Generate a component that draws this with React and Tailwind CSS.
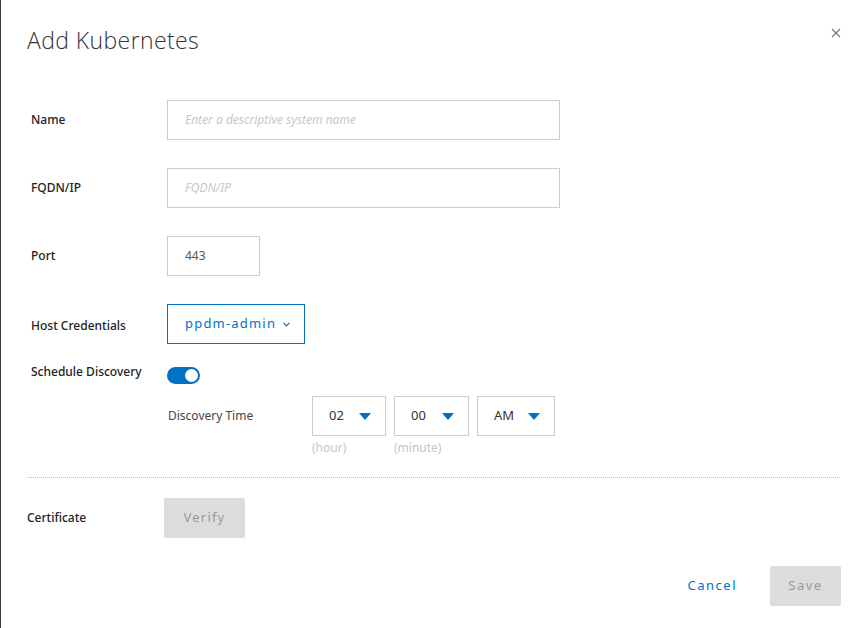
import React from 'react';

const font = { fontFamily: '"Noto Sans", "Open Sans", sans-serif' };

// Caret used in the time pickers
const Caret = () => (
  <svg width="12" height="7" viewBox="0 0 12 7" className="fill-[#0072c6]">
    <path d="M0 0 L12 0 L6 7 Z" />
  </svg>
);

const Label = ({ children, className = '' }) => (
  <div className={`w-[136px] shrink-0 text-[12px] font-medium text-[#222] ${className}`}>{children}</div>
);

const TextInput = ({ placeholder, value, width }) => (
  <div className={`${width} h-10 border border-[#ccc] flex items-center px-[17px] text-[12px]`}>
    {value ? (
      <span className="text-[#555]">{value}</span>
    ) : (
      <span className="italic text-[#c8c8c8]">{placeholder}</span>
    )}
  </div>
);

const TimeSelect = ({ value, width }) => (
  <div className={`${width} h-10 border border-[#ccc] flex items-center justify-between pl-[16px] pr-[14px] text-[13px] text-[#333]`}>
    <span>{value}</span>
    <Caret />
  </div>
);

export default function App() {
  return (
    <div className="w-[863px] h-[628px] bg-white border-l border-[#3a3a3a] relative overflow-hidden" style={font}>
      {/* Header */}
      <div className="flex items-start justify-between pl-[26px] pr-[22px] pt-[24px]">
        <h1 className="text-[23px] leading-[32px] font-light text-[#333] tracking-[0.4px]" style={{ fontFamily: '"Open Sans", sans-serif' }}>Add Kubernetes</h1>
        <button className="mt-[4px] text-[#777]">
          <svg width="10" height="10" viewBox="0 0 10 10" stroke="currentColor" strokeWidth="1.1">
            <path d="M1 1 L9 9 M9 1 L1 9" />
          </svg>
        </button>
      </div>

      {/* Form */}
      <div className="flex flex-col pl-[30px] mt-[44px]">
        <div className="flex items-center">
          <Label>Name</Label>
          <TextInput width="w-[393px]" placeholder="Enter a descriptive system name" />
        </div>
        <div className="flex items-center mt-[28px]">
          <Label>FQDN/IP</Label>
          <TextInput width="w-[393px]" placeholder="FQDN/IP" />
        </div>
        <div className="flex items-center mt-[28px]">
          <Label>Port</Label>
          <TextInput width="w-[93px]" value="443" />
        </div>
        <div className="flex items-center mt-[28px]">
          <Label className="pt-[3px]">Host Credentials</Label>
          <div className="w-[138px] h-10 border border-[#0072c6] flex items-center pl-[17px] pr-[10px] gap-[7px]">
            <span className="text-[13px] text-[#0072c6] tracking-[1.2px]">ppdm-admin</span>
            <svg width="7" height="5" viewBox="0 0 7 5" fill="none" stroke="#0072c6" strokeWidth="1.2">
              <path d="M0.5 0.8 L3.5 3.8 L6.5 0.8" />
            </svg>
          </div>
        </div>
        <div className="flex items-start mt-[19px]">
          <Label>Schedule Discovery</Label>
          <div className="mt-[4px] w-[33px] h-[17px] rounded-full bg-[#0072c6] flex items-center justify-end pr-[2px]">
            <div className="w-[13px] h-[13px] rounded-full bg-white" />
          </div>
        </div>
        <div className="flex mt-[12px] pl-[137px]">
          <div className="w-[144px] h-10 flex items-center text-[12px] text-[#444]">Discovery Time</div>
          <div className="flex flex-col">
            <TimeSelect width="w-[74px]" value="02" />
            <span className="text-[12px] text-[#c5c5c5] mt-[3px]">(hour)</span>
          </div>
          <div className="flex flex-col ml-[8px]">
            <TimeSelect width="w-[75px]" value="00" />
            <span className="text-[12px] text-[#c5c5c5] mt-[3px]">(minute)</span>
          </div>
          <div className="flex flex-col ml-[8px]">
            <TimeSelect width="w-[78px]" value="AM" />
          </div>
        </div>
      </div>

      {/* Divider */}
      <div className="ml-[26px] mr-[23px] mt-[20px] border-t border-dotted border-[#bbb]" />

      {/* Certificate */}
      <div className="flex items-center pl-[26px] mt-[20px]">
        <div className="w-[137px] text-[12px] font-medium text-[#222]">Certificate</div>
        <button className="w-[81px] h-10 rounded-[2px] bg-[#dcdcdc] text-[13px] text-[#999] tracking-[1.2px]">Verify</button>
      </div>

      {/* Footer */}
      <div className="flex items-center justify-end pr-[22px] mt-[28px]">
        <button className="text-[13px] text-[#0072c6] tracking-[1.5px] mr-[33px]">Cancel</button>
        <button className="w-[71px] h-10 rounded-[2px] bg-[#dcdcdc] text-[13px] text-[#999] tracking-[1.5px]">Save</button>
      </div>
    </div>
  );
}
